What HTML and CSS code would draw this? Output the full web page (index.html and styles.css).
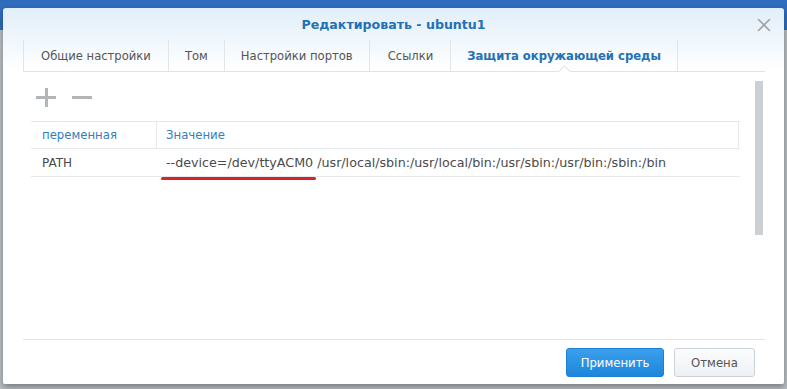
FILE: index.html
```html
<!DOCTYPE html>
<html lang="ru">
<head>
    <meta charset="UTF-8">
    <title>Редактировать - ubuntu1</title>
    <link rel="stylesheet" href="styles.css">
</head>
<body>
    <div class="desk">
        <div class="dialog">
            <div class="dialog-title">
                <span>Редактировать - ubuntu1</span>
                <button class="close-btn" type="button">
                    <svg width="14" height="14" viewBox="0 0 14 14" fill="none" stroke="currentColor" stroke-width="1.6" stroke-linecap="round">
                        <line x1="1.5" y1="1.5" x2="12.5" y2="12.5"></line>
                        <line x1="12.5" y1="1.5" x2="1.5" y2="12.5"></line>
                    </svg>
                </button>
            </div>

            <div class="tabs">
                <div class="tab">Общие настройки</div>
                <div class="tab">Том</div>
                <div class="tab">Настройки портов</div>
                <div class="tab links">Ссылки</div>
                <div class="tab active">Защита окружающей среды</div>
            </div>

            <div class="content">
                <div class="main">
                    <div class="toolbar">
                        <span class="tool plus"></span>
                        <span class="tool minus"></span>
                    </div>
                    <div class="grid">
                        <div class="grid-row head">
                            <div class="cell name">переменная</div>
                            <div class="cell value">Значение</div>
                            <div class="cell tail"></div>
                        </div>
                        <div class="grid-row">
                            <div class="cell name">PATH</div>
                            <div class="cell value">
                                <span class="value-text"><span class="marked">--device=/dev/ttyACM0</span> /usr/local/sbin:/usr/local/bin:/usr/sbin:/usr/bin:/sbin:/bin</span>
                            </div>
                        </div>
                    </div>
                </div>
                <div class="scrollbar"></div>
            </div>

            <div class="footer">
                <button class="btn primary" type="button">Применить</button>
                <button class="btn" type="button">Отмена</button>
            </div>
        </div>
    </div>
</body>
</html>
```

FILE: styles.css
```css
* {
    margin: 0;
    padding: 0;
    box-sizing: border-box;
}

body {
    width: 787px;
    height: 389px;
    overflow: hidden;
    font-family: 'DejaVu Sans', Verdana, sans-serif;
    font-size: 12px;
    color: #4a4a4a;
}

.desk {
    height: 389px;
    padding: 8px 3px 0 3px;
    background: linear-gradient(#2f6cbd 0, #2f6cbd 30px, #b9bec4 30px);
}

.dialog {
    height: 376px;
    display: flex;
    flex-direction: column;
    background: linear-gradient(#e1eef9 0, #ffffff 62px);
    border-radius: 3px 3px 2px 2px;
    box-shadow: 0 3px 6px rgba(0,0,0,0.35);
}

.dialog-title {
    height: 32px;
    display: flex;
    align-items: center;
    justify-content: center;
    position: relative;
    font-size: 12.6px;
    font-weight: bold;
    color: #2271b5;
}

.close-btn {
    position: absolute;
    right: 13px;
    top: 10px;
    border: none;
    background: none;
    color: #a0a4a8;
    width: 14px;
    height: 14px;
}

.tabs {
    margin: 0 19px 0 20px;
    height: 32px;
    display: flex;
    border-bottom: 1px solid #dfe3e6;
    position: relative;
    font-size: 11.6px;
}

.tab {
    display: flex;
    align-items: center;
    padding: 0 16px;
    border-right: 1px solid #e2e5e8;
    color: #555;
    white-space: nowrap;
    position: relative;
}

.tab:first-child {
    border-left: 1px solid #e2e5e8;
    padding: 0 17px;
}

.tab.links {
    padding: 0 17px 0 18px;
}

.tab.active {
    color: #2271b5;
    font-weight: bold;
}

.tab.active::after {
    content: "";
    position: absolute;
    left: 50%;
    bottom: -5px;
    width: 8px;
    height: 8px;
    margin-left: -4px;
    background: #fff;
    border-left: 1px solid #dfe3e6;
    border-top: 1px solid #dfe3e6;
    transform: rotate(45deg);
}

.content {
    flex: 1;
    display: flex;
    margin: 0 21px 0 20px;
    padding: 9px 0 0 8px;
}

.main {
    flex: 1;
}

.toolbar {
    height: 40px;
    display: flex;
    align-items: flex-start;
    gap: 16px;
    padding: 8px 0 0 5px;
}

.tool {
    width: 20px;
    height: 16px;
    position: relative;
}

.tool::before,
.plus::after {
    content: "";
    position: absolute;
    left: 0;
    top: 7px;
    width: 20px;
    height: 3px;
    background: #b3b6b9;
}

.plus::after {
    left: 9px;
    top: -1px;
    width: 3px;
    height: 19px;
}

.grid {
    width: 709px;
}

.grid-row {
    display: flex;
    height: 28px;
    border-bottom: 1px solid #e6e9eb;
}

.grid-row.head {
    border-top: 1px solid #e6e9eb;
    color: #2f7fbf;
    font-size: 11.7px;
}

.cell {
    display: flex;
    align-items: center;
    flex-shrink: 0;
    padding: 0 11px;
    white-space: nowrap;
}

.cell.name {
    width: 126px;
}

.head .cell.name,
.head .cell.value {
    border-right: 1px solid #e6e9eb;
}

.cell.value {
    width: 582px;
    padding-left: 9px;
}

.cell.tail {
    flex: 1;
    flex-shrink: 1;
    padding: 0;
}

.value-text {
    font-size: 12.7px;
}

.marked {
    position: relative;
}

.marked::after {
    content: "";
    position: absolute;
    left: -5px;
    right: -3px;
    bottom: -10px;
    height: 3px;
    border-radius: 2px;
    background: #d8232a;
}

.scrollbar {
    width: 8px;
    height: 154px;
    margin: 0 0 0 15px;
    background: #cdd0d3;
}

.footer {
    height: 45px;
    margin: 0 19px 0 20px;
    border-top: 1px solid #dfe3e6;
    display: flex;
    justify-content: flex-end;
    align-items: flex-start;
    gap: 10px;
    padding: 8px 10px 0 0;
}

.btn {
    height: 29px;
    padding: 0 10px;
    font-family: 'DejaVu Sans', Verdana, sans-serif;
    font-size: 11.7px;
    color: #555;
    border: 1px solid #ccd2d8;
    border-radius: 3px;
    background: linear-gradient(#fbfcfd, #eef1f4);
}

.btn.primary {
    width: 98px;
    color: #fff;
    border-color: #1c7fd0;
    background: linear-gradient(#3aa0ec, #1d86dc);
}

.btn:last-child {
    width: 81px;
}
```
